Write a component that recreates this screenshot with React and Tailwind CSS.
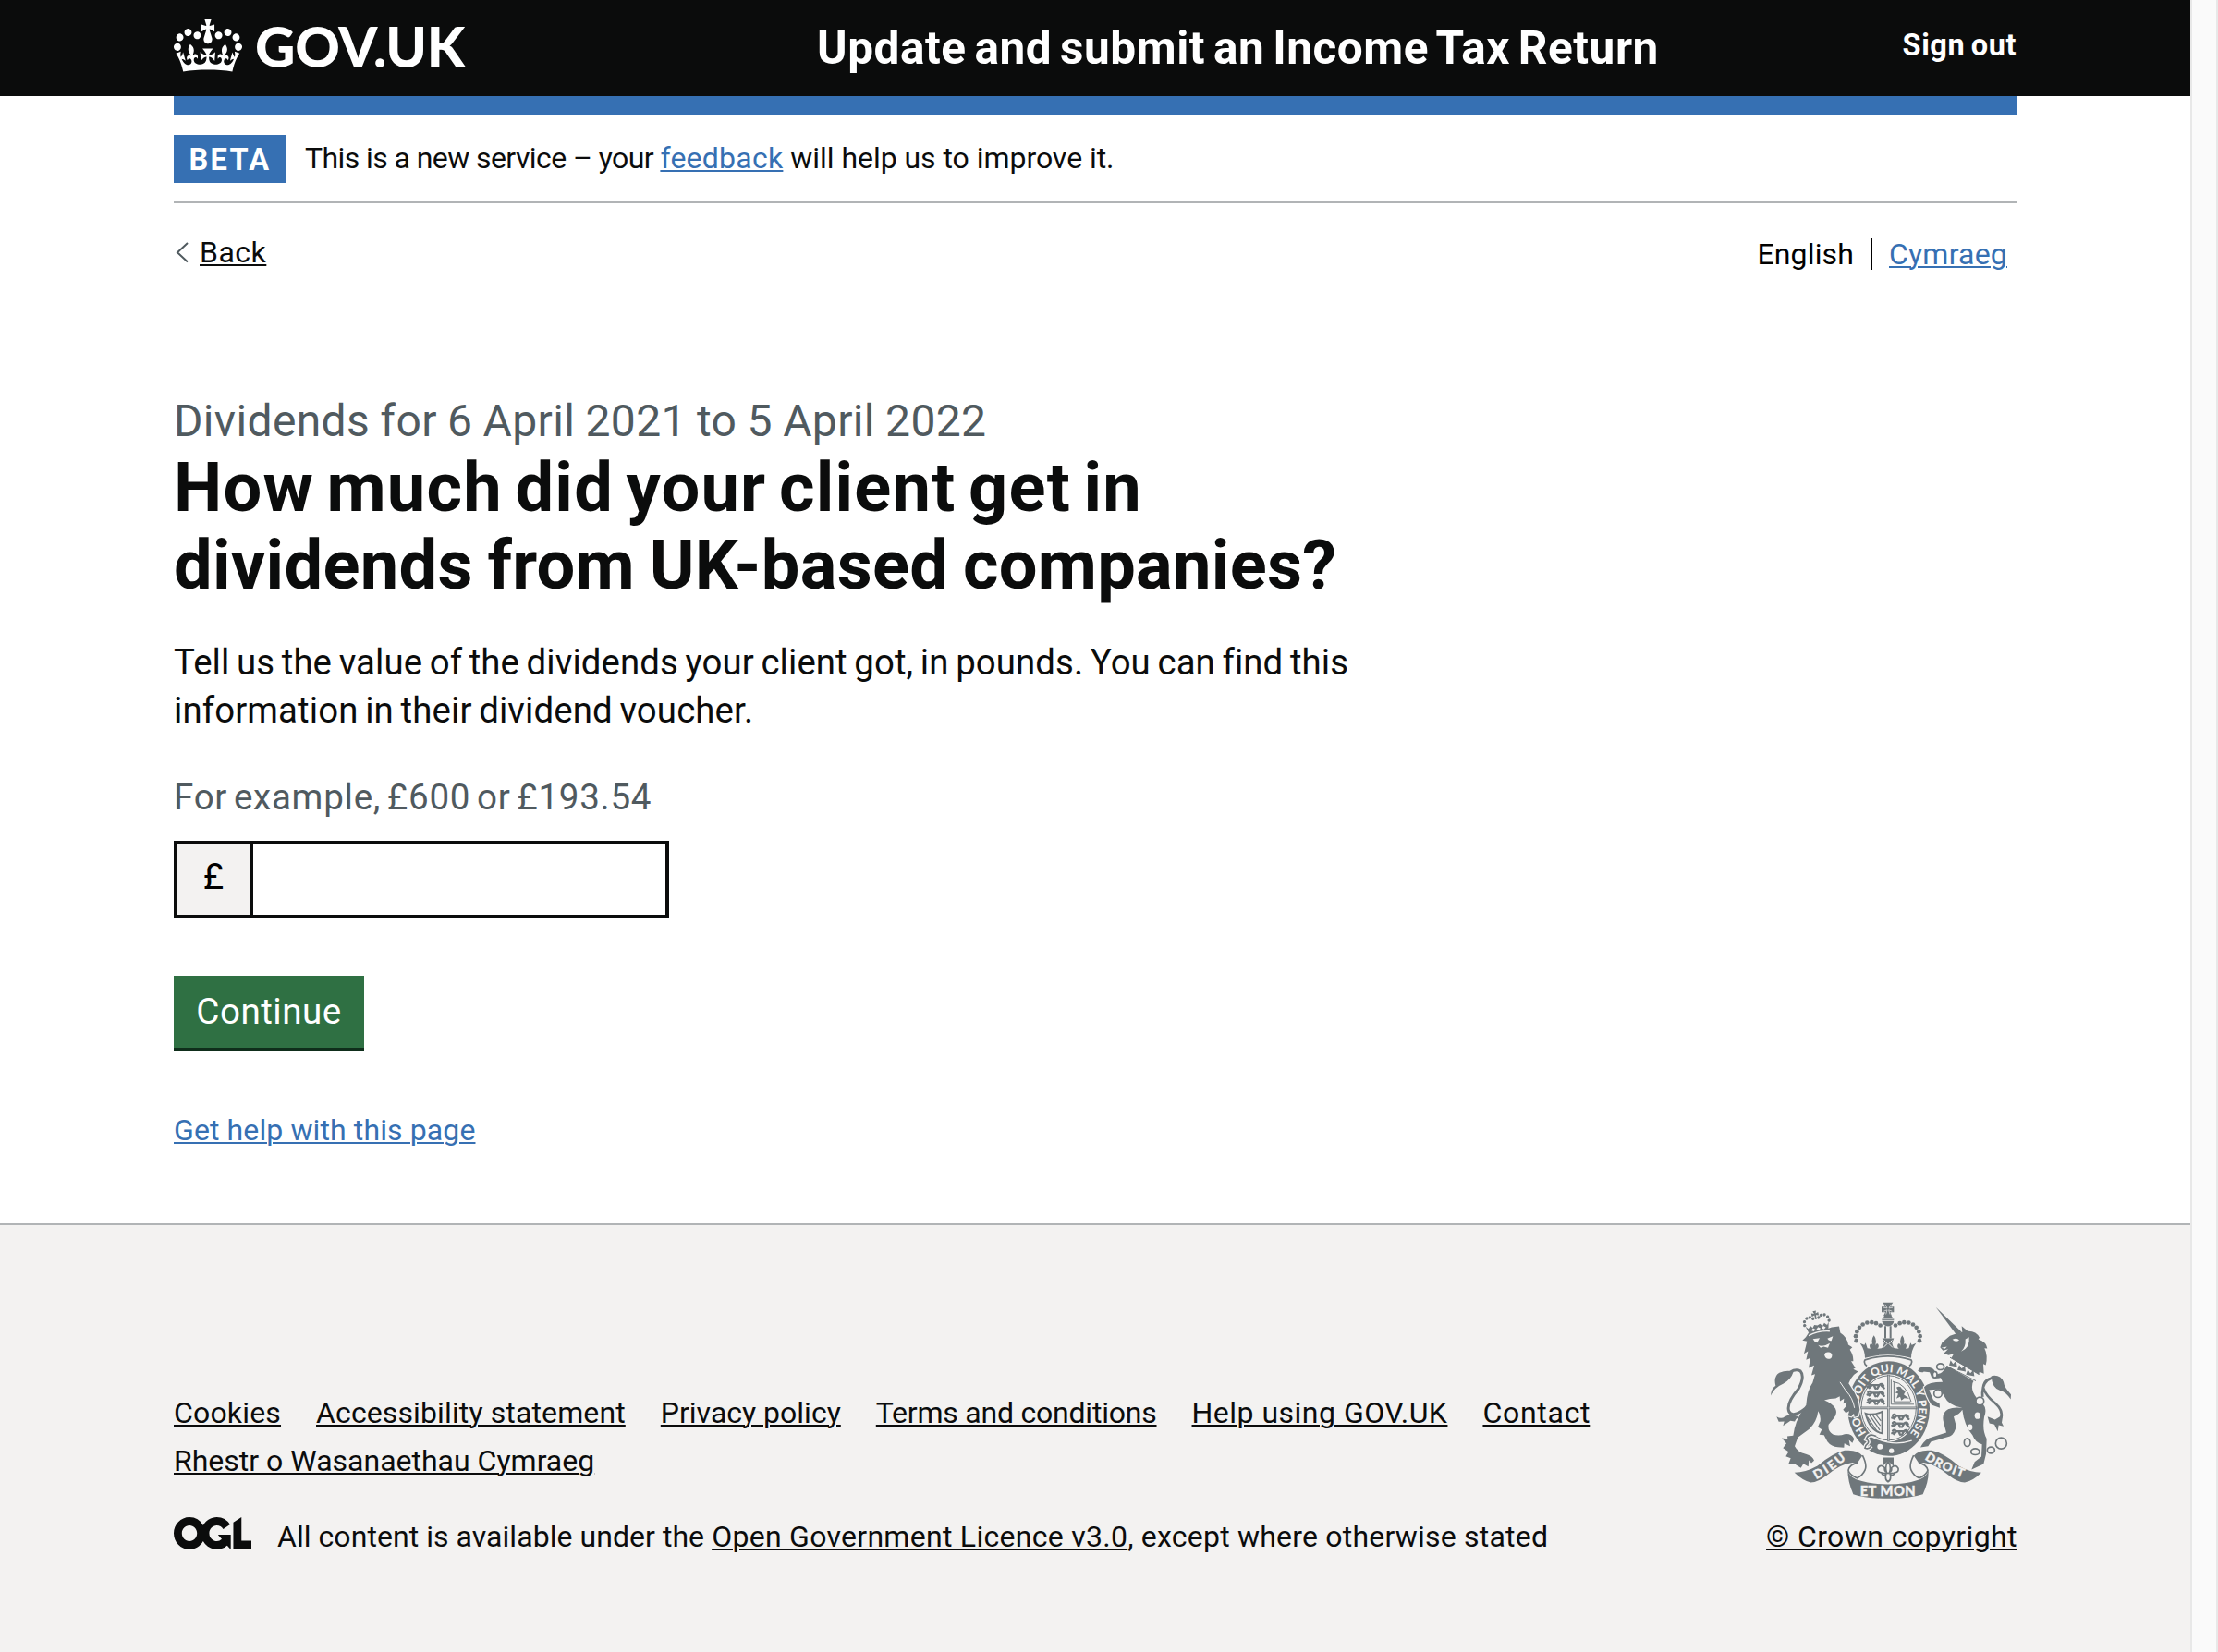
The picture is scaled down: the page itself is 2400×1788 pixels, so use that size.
const link = "underline decoration-2 underline-offset-[2px]";

function Crown() {
  return (
    <svg viewBox="0 0 132 97" className="block h-[57px] w-[74px] shrink-0" preserveAspectRatio="none" fill="currentColor" aria-hidden="true">
      <path
        fillRule="evenodd"
        d="M25 30.2c3.5 1.5 7.7-.2 9.1-3.7 1.5-3.6-.2-7.8-3.9-9.2-3.6-1.4-7.6.3-9.1 3.9-1.4 3.5.3 7.5 3.9 9zM9 39.5c3.6 1.5 7.8-.2 9.2-3.7 1.5-3.6-.2-7.8-3.9-9.1-3.6-1.5-7.6.2-9.1 3.8-1.4 3.5.3 7.5 3.8 9zM4.4 57.2c3.5 1.5 7.7-.2 9.1-3.8 1.5-3.6-.2-7.7-3.9-9.1-3.5-1.5-7.6.3-9.1 3.8-1.4 3.5.3 7.6 3.9 9.1zm38.3-21.4c3.5 1.5 7.7-.2 9.1-3.8 1.5-3.6-.2-7.7-3.9-9.1-3.6-1.5-7.6.3-9.1 3.8-1.3 3.6.4 7.7 3.9 9.1zm64.4-5.6c-3.6 1.5-7.8-.2-9.1-3.7-1.5-3.6.2-7.8 3.8-9.2 3.6-1.4 7.7.3 9.2 3.9 1.3 3.5-.4 7.5-3.9 9zm15.9 9.3c-3.6 1.5-7.7-.2-9.1-3.7-1.5-3.6.2-7.8 3.7-9.1 3.6-1.5 7.7.2 9.2 3.8 1.5 3.5-.3 7.5-3.8 9zm4.7 17.7c-3.6 1.5-7.8-.2-9.2-3.8-1.5-3.6.2-7.7 3.9-9.1 3.6-1.5 7.7.3 9.2 3.8 1.3 3.5-.4 7.6-3.9 9.1zM89.3 35.8c-3.6 1.5-7.8-.2-9.2-3.8-1.4-3.6.2-7.7 3.9-9.1 3.6-1.5 7.7.3 9.2 3.8 1.4 3.6-.3 7.7-3.9 9.1zM69.7 17.7l8.9 4.7V9.3l-8.9 2.8c-.2-.3-.5-.6-.9-.9L72.4 0H59.6l3.5 11.2c-.3.3-.6.5-.9.9l-8.8-2.8v13.1l8.8-4.7c.3.3.6.7.9.9l-5 15.4v.1c-.2.8-.4 1.6-.4 2.4 0 4.1 3.1 7.5 7 8.1h.2c.3 0 .7.1 1 .1.4 0 .7 0 1-.1h.2c4-.6 7.1-4.1 7.1-8.1 0-.8-.1-1.7-.4-2.4V34l-5.1-15.4c.4-.2.7-.6 1-.9zM66 92.8c16.9 0 32.8 1.1 47.1 3.2 4-16.9 8.9-26.7 14-33.5l-9.6-3.4c1 4.9 1.1 7.2 0 10.2-1.5-1.4-3-4.3-4.2-8.7L108.6 76c2.8-2 5-3.2 7.5-3.3-4.4 9.4-10 11.9-13.6 11.2-4.3-.8-6.3-4.6-5.6-7.9 1-4.7 5.7-5.9 8-.5 4.3-8.7-3-11.4-7.6-8.8 7.1-7.2 7.9-13.5 2.1-21.1-8 6.1-8.1 12.3-4.5 20.8-4.7-5.4-12.1-2.5-9.5 6.2 3.4-5.2 7.9-2 7.2 3.1-.6 4.3-6.4 7.8-13.5 7.2-10.3-.9-10.9-8-11.2-13.8 2.5-.5 7.1 1.8 11 7.3L80.2 60c-4.1 4.4-8 5.3-12.3 5.4 1.4-4.4 8-11.6 8-11.6H55.5s6.4 7.2 7.9 11.6c-4.2-.1-8-1-12.3-5.4l1.4 16.4c3.9-5.5 8.5-7.7 10.9-7.3-.3 5.8-.9 12.8-11.1 13.8-7.2.6-12.9-2.9-13.5-7.2-.7-5 3.8-8.3 7.1-3.1 2.7-8.7-4.6-11.6-9.4-6.2 3.7-8.5 3.6-14.7-4.6-20.8-5.8 7.6-5 13.9 2.2 21.1-4.7-2.6-11.9.1-7.7 8.8 2.3-5.5 7.1-4.2 8.1.5.7 3.3-1.3 7.1-5.7 7.9-3.5.7-9-1.8-13.5-11.2 2.5.1 4.7 1.3 7.5 3.3l-4.7-15.4c-1.2 4.4-2.7 7.2-4.3 8.7-1.1-3-.9-5.3 0-10.2l-9.5 3.4c5 6.9 9.9 16.7 14 33.5 14.8-2.1 30.8-3.2 47.7-3.2z"
      />
    </svg>
  );
}

function OglMark() {
  return (
    <svg viewBox="0 0 483.2 195.7" className="block h-[35px] w-[84px] shrink-0" preserveAspectRatio="none" fill="currentColor" aria-hidden="true">
      <path d="M421.5 142.8V.1l-50.7 32.3v161.1h112.4v-50.7zm-122.3-9.6A47.12 47.12 0 0 1 221 97.8c0-26 21.1-47.1 47.1-47.1 16.7 0 31.4 8.7 39.7 21.8l42.7-27.2A97.63 97.63 0 0 0 268.1 0c-36.5 0-68.3 20.1-85.1 49.7A98 98 0 0 0 97.8 0C43.9 0 0 43.9 0 97.8s43.9 97.8 97.8 97.8c36.5 0 68.3-20.1 85.1-49.7a97.76 97.76 0 0 0 149.6 25.4l19.4 22.2h3v-87.8h-80l24.3 27.5zM97.8 145c-26 0-47.1-21.1-47.1-47.1s21.1-47.1 47.1-47.1 47.1 21.1 47.1 47.1S123.8 145 97.8 145" />
    </svg>
  );
}

const ARCH_DOTS = [
  [356, 184], [354, 169], [358, 154], [366, 141], [377, 131], [391, 125], [406, 124], [420, 127], [434, 134],
];

function Lions({ x, y }) {
  return (
    <g transform={`translate(${x} ${y})`} fill="none" stroke="#6f777b" strokeWidth="7" strokeLinecap="round" strokeLinejoin="round">
      {[0, 25, 50].map((dy) => (
        <g key={dy} transform={`translate(0 ${dy})`}>
          <path d="M2 4q6-6 10 1l26 1q10-8 14 2M14 6l-8 9M22 8l4 9M38 7l-6 10M46 8l8 8M0 12l8-2" />
        </g>
      ))}
    </g>
  );
}

function CoatOfArms() {
  return (
    <svg viewBox="78 58 780 638" className="block h-[213px] w-[260px]" fill="#6f777b" aria-hidden="true">
      {/* royal crown */}
      <path d="M442 60h33l-9 13h12v18h-12l5 12h-27l6-12h-12V73h12zM443 110l10-16h10l12 16zM439 120h39q-2 16-19 17-17-1-20-17z" />
      <path d="M450 66l6 12-12-2M468 66l-6 12 12-2M445 88l11-4-4 14M472 88l-11-4 4 14" fill="none" stroke="#f3f2f1" strokeWidth="2" />
      <path d="M439 115h39" stroke="#6f777b" strokeWidth="4" />
      <path d="M450 136v40M467 136v40" stroke="#6f777b" strokeWidth="6" />
      {ARCH_DOTS.map(([x, y]) => (
        <g key={y}>
          <circle cx={x} cy={y} r="7" />
          <circle cx={917 - x} cy={y} r="7" />
        </g>
      ))}
      <path d="M384 240Q384 215 368 192L382 198L386 190L392 208L402 210Q396 200 402 194Q408 192 410 200Q402 180 413 166Q424 180 417 200Q420 192 426 194Q432 204 424 210L438 208Q444 204 446 190L440 176H478L472 190Q474 204 480 208L494 210Q486 204 492 194Q498 192 501 200Q494 180 505 166Q516 180 508 200Q510 192 516 194Q522 200 516 210L526 208L532 190L536 198L550 192Q534 215 534 240Q458 218 384 240Z" />
      <path d="M446 182l10 12-12 12M472 182l-10 12 12 12" fill="none" stroke="#f3f2f1" strokeWidth="3" />
      <path d="M390 266Q378 256 384 246Q458 222 534 246Q540 256 528 266" fill="none" stroke="#6f777b" strokeWidth="5" />

      {/* garter and shield */}
      <ellipse cx="461" cy="404" rx="133" ry="154" />
      <ellipse cx="461" cy="402" rx="93" ry="110" fill="#f3f2f1" />
      <ellipse cx="461" cy="402" rx="89" ry="105" fill="none" stroke="#6f777b" strokeWidth="3" />
      <path d="M368 402h186M460 294v216" stroke="#6f777b" strokeWidth="8" />
      <path d="M372 402h178M460 296v212" stroke="#f3f2f1" strokeWidth="2" />
      <Lions x={392} y={322} />
      <Lions x={472} y={422} />
      <path d="M469 310v80h74M478 318v64h54M474 316q44 6 60 66" fill="none" stroke="#6f777b" strokeWidth="3" />
      <path d="M486 336q12-8 18 4l12 8-6 10 18 14-16-2-10 8-4-12-12 6 6-16-10-4 10-6z" />
      <path d="M386 420Q410 428 440 414V484Q400 478 386 420Z" fill="none" stroke="#6f777b" strokeWidth="6" />
      <path d="M398 424l34 50M408 424l26 36M418 422l18 22M392 432l30 44" stroke="#6f777b" strokeWidth="3.5" />
      <defs>
        <path id="garter" d="M389 483A98 117 0 1 1 519 497" />
        <path id="dieu" d="M226 634Q278 608 332 560" />
        <path id="droit" d="M577 568Q630 604 710 632" />
      </defs>
      <text fill="#f3f2f1" fontFamily="Lato, sans-serif" fontWeight="900" fontSize="36">
        <textPath href="#garter" textLength="512">HONI SOIT QUI MAL Y PENSE</textPath>
      </text>
      <path d="M404 494Q470 530 546 514L526 538Q470 572 398 538Z" />
      <path d="M400 492Q470 530 536 508" fill="none" stroke="#f3f2f1" strokeWidth="4" />
      <path d="M420 494q-24-12-32 10 10 4 6 12-8 6-10 16 12 6 20-6" fill="none" stroke="#f3f2f1" strokeWidth="13" />
      <path d="M420 494q-24-12-32 10 10 4 6 12-8 6-10 16 12 6 20-6" fill="none" stroke="#6f777b" strokeWidth="5" />
      <circle cx="433" cy="528" r="9" fill="#f3f2f1" />
      <circle cx="470" cy="541" r="8" fill="#f3f2f1" />

      {/* lion */}
      <path
        d="M196 186L181 183L192 172L201 158Q245 153 276 140L300 137L304 158Q326 172 330 197L343 205L335 213Q347 232 346 250L339 250L353 272L346 276L362 284Q348 292 338 307L331 322L350 352L362 378L367 408L362 428L350 432L348 420L340 430L329 427L333 412L322 418L313 408L322 397L325 384L314 388L316 372L303 380L302 364L289 371Q270 371 252 377Q278 387 288 404Q296 422 282 436L266 456Q262 476 280 488Q300 494 318 487Q340 484 349 503L343 516L332 506L336 526L317 517L316 531L296 529Q275 528 262 511L251 490L236 489L244 472L231 464L239 445Q241 425 232 412Q228 445 204 470L166 498L156 526Q165 545 192 552Q214 558 219 573L210 581L202 572L200 592L184 583L176 597L157 585L136 583L143 565L127 559L136 544L118 532L129 517L114 500L133 503L132 494L151 492Q157 440 193 393Q196 345 214 320L222 292L210 296L219 264L201 272L207 240L193 246L199 218L186 226Z"
        stroke="#f3f2f1"
        strokeWidth="7"
        paintOrder="stroke"
      />
      <path d="M120 306Q150 270 174 282Q190 300 168 340Q128 386 137 413Q148 436 190 404" fill="none" stroke="#6f777b" strokeWidth="9" />
      <path d="M78 362Q80 338 94 330Q86 300 106 288Q128 278 152 284Q144 310 118 324Q90 336 78 362ZM97 430Q112 440 124 430L142 422L170 430Q160 436 156 446L142 444L118 460L122 446L104 447Z" />
      <path d="M303 318L322 346Q345 370 350 402" fill="none" stroke="#f3f2f1" strokeWidth="3" />
      <path d="M215 178l22-3-8 15q-10-2-14-12zM262 177l18-8-5 15q-9 2-13-7zM232 198q16 8 38-6l-6 15-14-4-10 4zM252 228a13 11 0 1 1 12 15q-10-2-12-15z" fill="#f3f2f1" />
      <g transform="rotate(-12 228 130)">
        <path d="M198 158l-8-28 8 9 8-8 6 8 7-8 10 3 9-3 7 8 7-8 8 8 7-9-7 28q-30-9-62 0zM223 86h11l-3 9 9-3v11l-9-3v14h-5v-14l-9 3V92l9 3z" />
        {[[188, 126], [190, 114], [199, 105], [210, 104], [219, 110], [238, 110], [247, 104], [258, 105], [267, 114], [269, 126]].map(([cx, cy]) => (
          <circle key={cx} cx={cx} cy={cy} r="5" />
        ))}
        <path d="M206 146l7-6 7 6-7 5zM223 146l7-6 7 6-7 5zM240 146l7-6 7 6-7 5z" fill="#f3f2f1" />
        <path d="M194 161q34-10 70 0" fill="none" stroke="#f3f2f1" strokeWidth="4" />
      </g>

      {/* unicorn */}
      <path d="M614 75L698 156L682 166Z" />
      <path d="M700 156L698 136L718 153Q745 152 756 174L752 179Q778 188 781 209L772 208Q784 232 776 263L768 259L770 291L756 285L752 296L735 292L718 277L694 268L662 245L672 226L655 231L640 225L654 211L637 216L628 205L634 190Q648 178 660 168Q676 162 700 156Z" />
      <path d="M668 180q14-8 22 2-12 8-22-2zM722 172q4 34-26 47 16-14 14-40zM632 207l18-4-6 7z" fill="#f3f2f1" />
      <path
        d="M652 262L740 308Q720 338 748 372Q786 396 771 432Q764 476 779 502L777 552L769 584L730 602L740 577L762 560L764 520Q742 514 733 490Q706 460 700 408Q690 424 672 430L680 460Q676 486 660 494L598 512L589 526L564 530Q574 510 592 500L648 482L640 452Q630 420 654 406Q672 398 700 402Q656 396 640 362L628 342Q600 342 592 344L606 376L626 388L627 402L600 392Q582 364 576 334Q590 318 636 318L630 304Q606 308 600 302L594 286L575 284Q570 290 556 282Q558 268 578 268Q596 268 606 276L618 292Q630 292 638 282Z"
        stroke="#f3f2f1"
        strokeWidth="7"
        paintOrder="stroke"
      />
      <path d="M660 238L756 296L742 318L649 264Z" fill="#f3f2f1" />
      <path d="M660 238L758 294M649 266L744 314" stroke="#6f777b" strokeWidth="3" />
      <path d="M657 264l5-17 8 12 10-10 3 20zM684 279l6-17 8 12 10-10 3 20zM712 294l6-17 8 12 10-10 3 20z" />
      <path d="M766 366Q760 318 796 304M812 304Q770 304 768 336Q776 362 806 386Q838 414 822 440" fill="none" stroke="#6f777b" strokeWidth="8" />
      <path d="M794 298Q824 292 834 318Q836 336 858 358L857 374Q842 350 824 346Q796 338 794 298ZM782 430L806 440L832 424L828 450L834 462L818 458L815 478L804 456L788 452Z" />
      {[[629, 268, 12, 10], [621, 355, 13, 13], [611, 294, 7, 10], [757, 380, 13, 13], [716, 514, 10, 13], [742, 544, 14, 10], [793, 539, 12, 10], [826, 517, 18, 18]].map(([cx, cy, rx, ry]) => (
        <ellipse key={cx} cx={cx} cy={cy} rx={rx} ry={ry} fill="#f3f2f1" stroke="#6f777b" strokeWidth="5" />
      ))}
      <ellipse cx="749" cy="427" rx="9" ry="11" fill="#f3f2f1" />
      <ellipse cx="725" cy="465" rx="8" ry="10" fill="#f3f2f1" />

      {/* fleur-de-lis */}
      <path d="M441 563h36v28l-18-16-18 16z" />
      <path d="M459 576Q448 592 454 610Q446 608 448 596Q434 582 426 598Q424 612 438 612Q440 624 452 618Q448 636 459 642Q470 636 466 618Q478 624 480 612Q494 612 492 598Q484 582 470 596Q472 608 464 610Q470 592 459 576Z" fill="#f3f2f1" stroke="#6f777b" strokeWidth="5" />
      <path d="M441 614h36" stroke="#6f777b" strokeWidth="5" />

      {/* motto ribbon */}
      <path d="M155 612Q190 612 230 590Q280 548 318 540Q360 536 376 558Q390 580 382 602Q372 578 340 580Q300 586 264 618Q232 644 208 644Q184 640 155 612Z" />
      <path d="M762 612Q727 612 688 590Q640 548 600 540Q558 536 542 558Q528 580 536 602Q546 578 578 580Q616 586 652 618Q684 644 708 644Q734 640 762 612Z" />
      <path d="M376 556Q392 588 384 604Q376 622 358 630Q332 618 330 604Q334 586 360 580M542 556Q526 588 534 604Q542 622 560 630Q584 618 588 604Q584 586 558 580" fill="#f3f2f1" stroke="#6f777b" strokeWidth="5" />
      <path d="M328 604Q332 624 356 634Q402 650 458 650Q516 650 562 634Q586 624 590 604Q592 640 572 682Q530 696 458 696Q386 696 346 682Q328 640 328 604Z" />
      <g fill="#f3f2f1" stroke="#f3f2f1" strokeWidth="1" fontFamily="Lato, sans-serif" fontWeight="900">
        <text fontSize="40"><textPath href="#dieu" textLength="118">DIEU</textPath></text>
        <text fontSize="40"><textPath href="#droit" textLength="138">DROIT</textPath></text>
        <text x="368" y="687" fontSize="44" textLength="180">ET MON</text>
      </g>
    </svg>
  );
}

function Header() {
  return (
    <header className="h-[104px] bg-[#0b0c0c] text-white">
      <div className="mx-auto flex h-full w-[1994px] items-center">
        <div className="flex w-[696px] items-center gap-3.5 pb-[5px]">
          <Crown />
          <span className="font-['Lato',sans-serif] text-[60px] leading-[60px] font-black tracking-[-0.2px]">GOV.UK</span>
        </div>
        <span className="text-[49.5px] leading-[48px] font-bold tracking-[0.55px] [word-spacing:-4px] whitespace-nowrap">Update and submit an Income Tax Return</span>
        <a className="ml-auto pb-1.5 text-[32.5px] leading-10 font-bold tracking-[0.55px] [word-spacing:-2px] whitespace-nowrap">Sign out</a>
      </div>
    </header>
  );
}

function Main() {
  return (
    <div className="mx-auto w-[1994px] grow">
      <div className="h-5 bg-[#3670b3]" />
      <div className="flex h-24 items-start border-b-2 border-[#b1b4b6] pt-[22px]">
        <strong className="flex h-[52px] w-[122px] shrink-0 items-center justify-center bg-[#3670b3] pt-px text-[32.5px] leading-10 tracking-[2.3px] text-white">BETA</strong>
        <p className="ml-5 pt-[5px] text-[32px] leading-10 whitespace-pre">
          <span className="tracking-[-0.58px]">This is a new service – your </span>
          <a className={`${link} tracking-[0.24px] text-[#3670b3]`}>feedback</a>
          <span className="tracking-[-0.04px]"> will help us to improve it.</span>
        </p>
      </div>
      <div className="flex h-[75px] items-start justify-between pt-[33px] text-[32px] leading-10">
        <a className="flex items-center">
          <svg viewBox="0 0 16 24" className="ml-0.5 h-6 w-4" fill="none" stroke="#505a5f" strokeWidth="2" aria-hidden="true">
            <path d="M13 2L2 12.3L13 22.5" />
          </svg>
          <span className={`${link} ml-2.5 tracking-[0.5px]`}>Back</span>
        </a>
        <div className="mr-2.5 flex items-center pt-0.5 text-black">
          <span className="mr-[18px] tracking-[0.14px]">English</span>
          <span className="mr-[18px] h-[34px] w-0.5 bg-black" />
          <a className={`${link} tracking-[0.2px] text-[#3670b3]`}>Cymraeg</a>
        </div>
      </div>

      <main className="pt-[133px]">
        <p className="text-[48px] leading-[56px] tracking-[0.35px] [word-spacing:-1px] text-[#505a5f]">Dividends for 6 April 2021 to 5 April 2022</p>
        <h1 className="pt-0.5 text-[74px] leading-[84px] font-bold whitespace-nowrap">
          <span className="block tracking-[1.2px] [word-spacing:-6px]">How much did your client get in</span>
          <span className="block tracking-[0.3px] [word-spacing:-3px]">dividends from UK-based companies?</span>
        </h1>
        <p className="mt-[37px] text-[38.4px] leading-[52px] [word-spacing:-2px] whitespace-nowrap">
          <span className="block tracking-[0.08px]">Tell us the value of the dividends your client got, in pounds. You can find this</span>
          <span className="block tracking-[0.11px]">information in their dividend voucher.</span>
        </p>
        <p className="mt-[42px] text-[38.6px] leading-[52px] tracking-[0.71px] [word-spacing:-3.5px] text-[#505a5f]">For example, £600 or £193.54</p>
        <div className="mt-[21px] flex h-[84px] w-[536px] border-4 border-[#0b0c0c]">
          <span className="flex w-[82px] shrink-0 items-center justify-center border-r-4 border-[#0b0c0c] bg-[#f3f2f1] pb-1.5 text-[38.6px] leading-[52px] text-black">£</span>
          <input aria-label="Amount in pounds" className="min-w-0 grow bg-white px-2 text-[38px] outline-none" />
        </div>
        <button className="mt-[62px] flex h-[82px] w-[206px] items-center justify-center border-b-4 border-[#0f2e1b] bg-[#2f7043] text-[38.6px] leading-[52px] tracking-[0.5px] text-white">Continue</button>
        <a className={`${link} mt-[65px] block w-fit text-[32px] leading-10 tracking-[0.11px] text-[#3670b3]`}>Get help with this page</a>
      </main>
    </div>
  );
}

function Footer() {
  return (
    <footer className="h-[464px] border-t-2 border-[#b1b4b6] bg-[#f3f2f1] text-[32px] leading-[52px]">
      <div className="mx-auto flex w-[1994px] justify-between pt-[83px]">
        <div className="pt-[94px] whitespace-nowrap">
          <nav className="flex w-[1600px] flex-wrap gap-x-[38px]">
            <a className={`${link} tracking-[0.17px]`}>Cookies</a>
            <a className={`${link} tracking-[0.12px]`}>Accessibility statement</a>
            <a className={link}>Privacy policy</a>
            <a className={`${link} tracking-[-0.22px]`}>Terms and conditions</a>
            <a className={`${link} tracking-[0.49px]`}>Help using GOV.UK</a>
            <a className={`${link} tracking-[0.71px]`}>Contact</a>
            <a className={link}>Rhestr o Wasanaethau Cymraeg</a>
          </nav>
          <div className="mt-[30px] flex items-start">
            <div className="pt-[5px]">
              <OglMark />
            </div>
            <p className="ml-7 whitespace-pre">
              <span className="tracking-[0.05px]">All content is available under the </span>
              <a className={`${link} tracking-[0.28px]`}>Open Government Licence v3.0</a>
              <span className="tracking-[0.21px]">, except where otherwise stated</span>
            </p>
          </div>
        </div>
        <a className="flex flex-col items-end whitespace-nowrap">
          <span className="mr-1.5">
            <CoatOfArms />
          </span>
          <span className={`${link} mt-[15px] -mr-px tracking-[0.41px]`}>© Crown copyright</span>
        </a>
      </div>
    </footer>
  );
}

export default function App() {
  return (
    <div className="flex h-[1788px] w-[2400px] overflow-hidden bg-white font-['Roboto',sans-serif] text-[#0b0c0c]">
      <div className="flex w-[2370px] shrink-0 flex-col">
        <Header />
        <Main />
        <Footer />
      </div>
      <div className="w-[30px] border-x-2 border-[#e8e8e8] bg-[#fafafa]" />
    </div>
  );
}
